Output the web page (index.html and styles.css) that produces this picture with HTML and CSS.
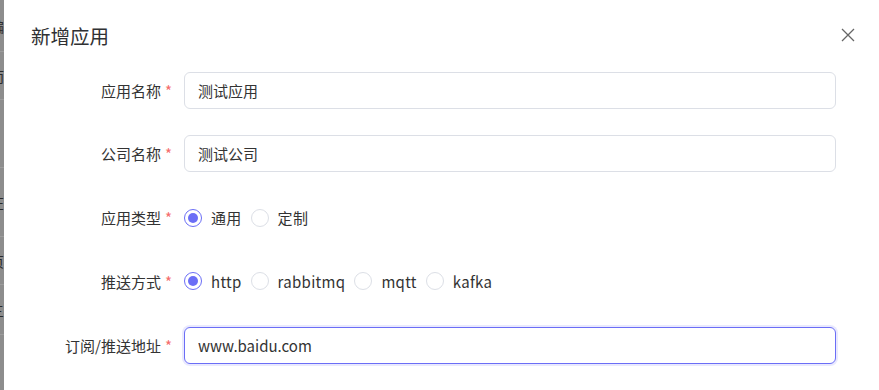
FILE: index.html
```html
<!DOCTYPE html>
<html lang="zh">
<head>
    <meta charset="UTF-8">
    <title>新增应用</title>
    <link rel="stylesheet" href="styles.css">
</head>
<body>
<div class="page">
    <div class="backdrop">
        <div class="bg-row r1">编</div>
        <div class="bg-row r2">而</div>
        <div class="bg-row r3"></div>
        <div class="bg-row r4">在</div>
        <div class="bg-row r5">页</div>
        <div class="bg-row r6">三</div>
        <div class="bg-row r7"></div>
    </div>
    <div class="dialog">
        <div class="dialog-header">
            <span class="dialog-title">新增应用</span>
            <svg class="close" width="14" height="14" viewBox="0 0 14 14">
                <path d="M1 1L13 13M13 1L1 13" stroke="#666" stroke-width="1.3" fill="none"/>
            </svg>
        </div>
        <div class="form">
            <div class="form-item">
                <label class="label">应用名称<i>*</i></label>
                <div class="control">
                    <input type="text" class="input" value="测试应用">
                </div>
            </div>
            <div class="form-item">
                <label class="label">公司名称<i>*</i></label>
                <div class="control">
                    <input type="text" class="input" value="测试公司">
                </div>
            </div>
            <div class="form-item">
                <label class="label">应用类型<i>*</i></label>
                <div class="control">
                    <span class="radio checked"><b></b>通用</span>
                    <span class="radio"><b></b>定制</span>
                </div>
            </div>
            <div class="form-item">
                <label class="label">推送方式<i>*</i></label>
                <div class="control">
                    <span class="radio checked"><b></b>http</span>
                    <span class="radio"><b></b>rabbitmq</span>
                    <span class="radio"><b></b>mqtt</span>
                    <span class="radio"><b></b>kafka</span>
                </div>
            </div>
            <div class="form-item">
                <label class="label">订阅/推送地址<i>*</i></label>
                <div class="control">
                    <input type="text" class="input focus" value="www.baidu.com">
                </div>
            </div>
        </div>
    </div>
</div>
</body>
</html>
```

FILE: styles.css
```css
*{
    margin: 0;
    padding: 0;
    box-sizing: border-box;
}
body{
    font-family: "Noto Sans CJK SC", "Noto Sans", sans-serif;
    font-size: 15px;
    color: #333;
    background: #fff;
}
.page{
    display: flex;
    height: 390px;
    overflow: hidden;
}
.backdrop{
    width: 4px;
    background-color: #8d8d8d;
    overflow: hidden;
    flex-shrink: 0;
}
.bg-row{
    display: flex;
    align-items: center;
    border-bottom: 1px solid #9c9c9c;
    font-size: 14px;
    color: #2a2a2a;
    text-indent: -10px;
    white-space: nowrap;
}
.r1{ height: 52px; }
.r2{ height: 48px; }
.r3{ height: 68px; }
.r4{ height: 69px; }
.r5{ height: 48px; }
.r6{ height: 50px; }
.r7{ height: 55px; border-bottom: none; }
.dialog{
    flex: 1;
    background: #fff;
}
.dialog-header{
    display: flex;
    align-items: center;
    justify-content: space-between;
    height: 70px;
    padding: 0 24px 0 27px;
}
.dialog-title{
    font-size: 19.5px;
    color: #303133;
}
.close{
    display: block;
}
.form{
    padding: 2px 43px 0 0;
}
.form-item{
    display: flex;
    align-items: center;
    height: 36px;
    margin-bottom: 27.75px;
}
.label{
    width: 180px;
    padding-right: 12px;
    text-align: right;
    color: #333;
    flex-shrink: 0;
}
.label i{
    font-style: normal;
    color: #f56c6c;
    margin-left: 4px;
}
.control{
    flex: 1;
    display: flex;
    align-items: center;
}
.input{
    width: 100%;
    height: 37px;
    border: 1px solid #dcdfe6;
    border-radius: 6px;
    padding: 0 13px;
    font-family: inherit;
    font-size: 15px;
    color: #333;
    outline: none;
}
.input.focus{
    border-color: #6b6ef6;
    box-shadow: 0 0 0 2px rgba(107, 110, 246, 0.15);
}
.radio{
    display: inline-flex;
    align-items: center;
    margin-right: 9px;
    color: #333;
    letter-spacing: 0.3px;
}
.radio b{
    display: inline-block;
    width: 18px;
    height: 18px;
    border: 1px solid #dcdfe6;
    border-radius: 50%;
    margin-right: 9px;
    position: relative;
}
.radio.checked b{
    border-color: #6b6ef6;
}
.radio.checked b::after{
    content: "";
    position: absolute;
    left: 3px;
    top: 3px;
    width: 10px;
    height: 10px;
    border-radius: 50%;
    background: #6b6ef6;
}
```
